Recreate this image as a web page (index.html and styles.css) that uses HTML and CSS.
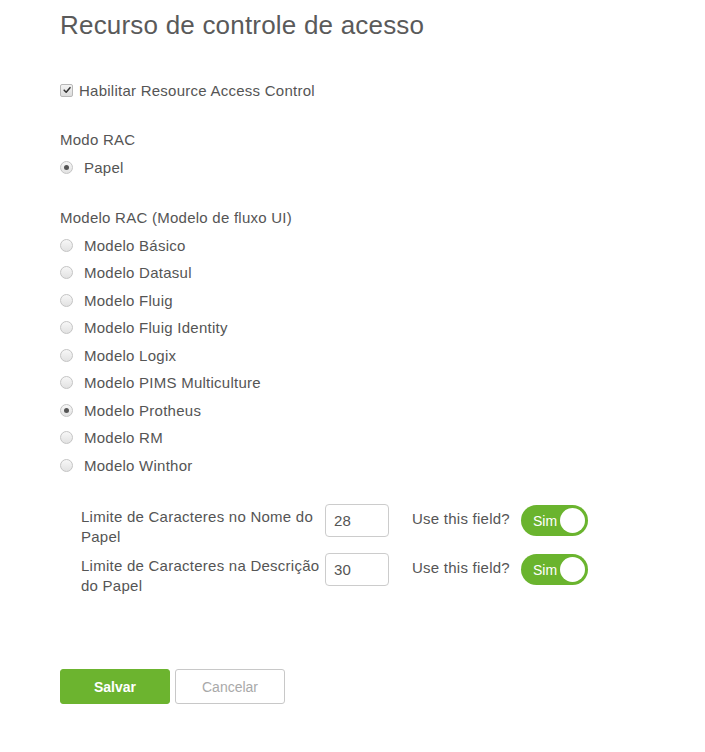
FILE: index.html
```html
<!DOCTYPE html>
<html lang="pt">
<head>
<meta charset="utf-8">
<title>Recurso de controle de acesso</title>
<link rel="stylesheet" href="styles.css">
</head>
<body>
<div class="page">
  <h1 class="title">Recurso de controle de acesso</h1>

  <div class="check-row">
    <span class="checkbox"><svg viewBox="0 0 12 12" width="12" height="12"><path d="M2.6 6.2 L5 8.6 L9.6 3.2" fill="none" stroke="#333" stroke-width="1.8" stroke-linecap="round" stroke-linejoin="round"/></svg></span>
    <span>Habilitar Resource Access Control</span>
  </div>

  <div class="section section-mode">
    <div class="section-label">Modo RAC</div>
    <div class="radio-row"><span class="radio checked"></span><span>Papel</span></div>
  </div>

  <div class="section">
    <div class="section-label">Modelo RAC (Modelo de fluxo UI)</div>
    <div class="radio-row"><span class="radio"></span><span>Modelo Básico</span></div>
    <div class="radio-row"><span class="radio"></span><span>Modelo Datasul</span></div>
    <div class="radio-row"><span class="radio"></span><span>Modelo Fluig</span></div>
    <div class="radio-row"><span class="radio"></span><span>Modelo Fluig Identity</span></div>
    <div class="radio-row"><span class="radio"></span><span>Modelo Logix</span></div>
    <div class="radio-row"><span class="radio"></span><span>Modelo PIMS Multiculture</span></div>
    <div class="radio-row"><span class="radio checked"></span><span>Modelo Protheus</span></div>
    <div class="radio-row"><span class="radio"></span><span>Modelo RM</span></div>
    <div class="radio-row"><span class="radio"></span><span>Modelo Winthor</span></div>
  </div>

  <div class="fields">
    <div class="field-row">
      <div class="field-label">Limite de Caracteres no Nome do Papel</div>
      <div class="field-input">28</div>
      <div class="use-label">Use this field?</div>
      <div class="toggle"><span class="toggle-text">Sim</span><span class="knob"></span></div>
    </div>
    <div class="field-row">
      <div class="field-label">Limite de Caracteres na Descrição do Papel</div>
      <div class="field-input">30</div>
      <div class="use-label">Use this field?</div>
      <div class="toggle"><span class="toggle-text">Sim</span><span class="knob"></span></div>
    </div>
  </div>

  <div class="buttons">
    <button class="btn btn-primary">Salvar</button>
    <button class="btn btn-default">Cancelar</button>
  </div>
</div>
</body>
</html>
```

FILE: styles.css
```css
html, body {
  margin: 0;
  padding: 0;
  background: #fff;
}
body {
  font-family: "Liberation Sans", Arial, sans-serif;
  color: #555;
  font-size: 15px;
  letter-spacing: 0.25px;
}
.page {
  padding: 10px 0 40px 60px;
}
.title {
  margin: 0;
  font-size: 26px;
  line-height: 30px;
  font-weight: normal;
  color: #5a5a5a;
  letter-spacing: 0.2px;
}
.check-row {
  margin-top: 36px;
  height: 28px;
  display: flex;
  align-items: center;
  gap: 6px;
}
.checkbox {
  width: 11px;
  height: 11px;
  border: 1px solid #b8b8b8;
  border-radius: 2px;
  background: linear-gradient(#f4f4f4, #dcdcdc);
  display: flex;
  align-items: center;
  justify-content: center;
  box-sizing: content-box;
}
.checkbox svg {
  width: 10px;
  height: 10px;
}
.section {
  margin-top: 23px;
}
.section-mode {
  margin-top: 22px;
}
.section-label {
  height: 27.5px;
  line-height: 27.5px;
}
.radio-row {
  height: 27.5px;
  display: flex;
  align-items: center;
  gap: 11px;
}
.radio {
  width: 11px;
  height: 11px;
  border-radius: 50%;
  border: 1px solid #c4c4c4;
  background: linear-gradient(#f7f7f7, #e2e2e2);
  display: flex;
  align-items: center;
  justify-content: center;
  flex: none;
}
.radio.checked::after {
  content: "";
  width: 5px;
  height: 5px;
  border-radius: 50%;
  background: #555;
}
.fields {
  margin-top: 25px;
  padding-left: 21px;
}
.field-row {
  display: flex;
  align-items: flex-start;
  margin-bottom: 6px;
}
.field-label {
  width: 240px;
  padding-top: 3px;
  line-height: 20px;
  margin-right: 4px;
}
.field-input {
  width: 64px;
  height: 33px;
  box-sizing: border-box;
  border: 1px solid #ccc;
  border-radius: 4px;
  padding-left: 8px;
  line-height: 31px;
  color: #555;
}
.use-label {
  margin-left: 23px;
  width: 97px;
  white-space: nowrap;
  line-height: 20px;
  padding-top: 5px;
  margin-right: 12px;
}
.toggle {
  width: 67px;
  height: 31px;
  border-radius: 16px;
  background: #6ab42e;
  display: flex;
  align-items: center;
  justify-content: space-between;
  padding: 0 3px 0 12px;
  box-sizing: border-box;
  margin-top: 1px;
}
.toggle-text {
  color: #fff;
  font-size: 14px;
  letter-spacing: 0;
}
.knob {
  width: 25px;
  height: 25px;
  border-radius: 50%;
  background: #fff;
}
.buttons {
  margin-top: 73px;
  display: flex;
  gap: 5px;
}
.btn {
  width: 110px;
  height: 35px;
  border-radius: 3px;
  font-family: "Liberation Sans", Arial, sans-serif;
  font-size: 14px;
  cursor: pointer;
}
.btn-primary {
  background: #6cb42f;
  border: 1px solid #6cb42f;
  color: #fff;
  font-weight: 600;
}
.btn-default {
  background: #fff;
  border: 1px solid #c8c8c8;
  color: #a9a9a9;
}
```
